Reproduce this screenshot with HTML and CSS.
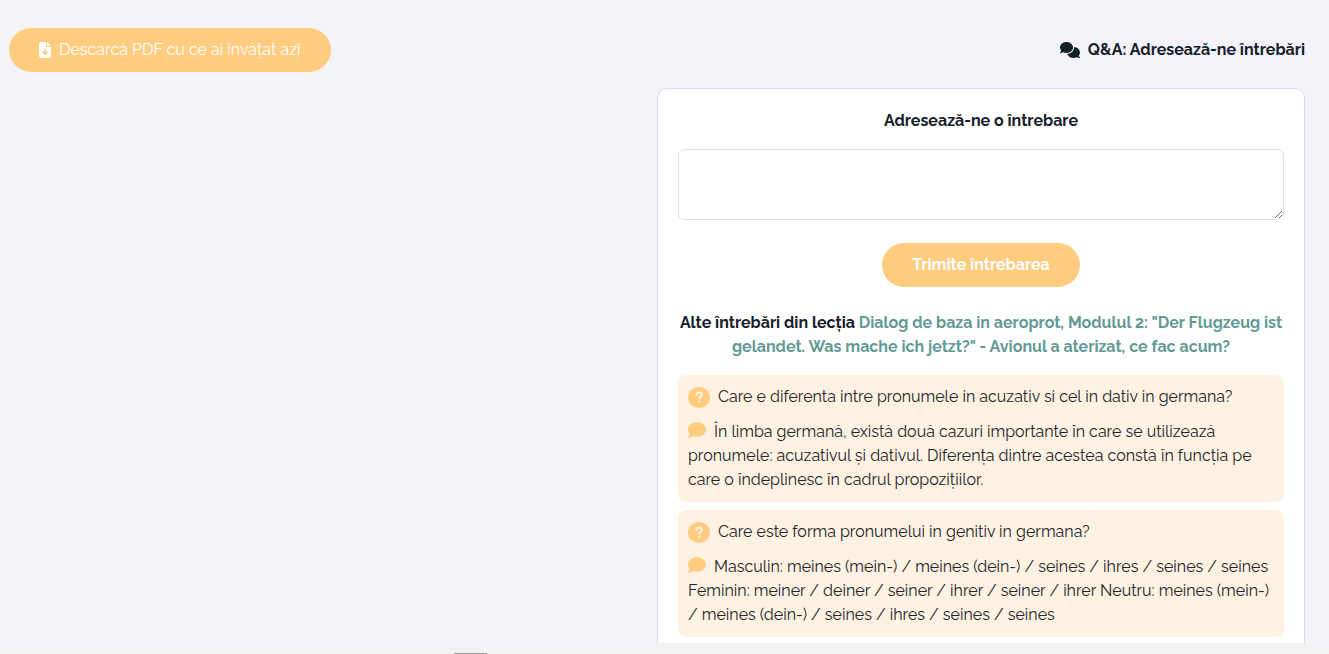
FILE: index.html
```html
<!DOCTYPE html>
<html lang="ro">
<head>
  <meta charset="UTF-8" />
  <meta name="viewport" content="width=device-width, initial-scale=1" />
  <title>Întrebări lecție</title>
  <link rel="stylesheet" href="styles.css">
</head>
<body>
  <svg class="sprite" aria-hidden="true">
    <symbol id="icon-file" viewBox="0 0 384 512">
      <path d="M64 0C28.7 0 0 28.7 0 64V448c0 35.3 28.7 64 64 64H320c35.3 0 64-28.7 64-64V160H256c-17.7 0-32-14.3-32-32V0H64zM256 0V128H384L256 0zM216 232V334.1l31-31c9.4-9.4 24.6-9.4 33.9 0s9.4 24.6 0 33.9l-72 72c-9.4 9.4-24.6 9.4-33.9 0l-72-72c-9.4-9.4-9.4-24.6 0-33.9s24.6-9.4 33.9 0l31 31V232c0-13.3 10.7-24 24-24s24 10.7 24 24z" />
    </symbol>
    <symbol id="icon-comments" viewBox="0 0 640 512">
      <path d="M208 352c114.9 0 208-78.8 208-176S322.9 0 208 0S0 78.8 0 176c0 38.6 14.7 74.3 39.6 103.4c-3.5 9.4-8.7 17.7-14.2 24.7c-4.8 6.2-9.7 11-13.3 14.3c-1.8 1.6-3.3 2.9-4.3 3.7c-.5 .4-.9 .7-1.1 .8l-.2 .2C1 327.2-1.4 334.4 .8 340.9S9.1 352 16 352c21.8 0 43.8-5.6 62.1-12.5c9.2-3.5 17.8-7.4 25.2-11.4C134.1 343.3 169.8 352 208 352zM448 176c0 112.3-99.1 196.9-216.5 207C255.8 457.4 336.4 512 432 512c38.2 0 73.9-8.7 104.7-23.9c7.5 4 16 7.9 25.2 11.4c18.3 6.9 40.3 12.5 62.1 12.5c6.9 0 13.1-4.5 15.2-11.1c2.1-6.6-.2-13.8-5.8-17.9l-.2-.2c-.2-.2-.6-.4-1.1-.8c-1-.8-2.5-2-4.3-3.7c-3.6-3.3-8.5-8.1-13.3-14.3c-5.5-7-10.7-15.4-14.2-24.7c24.9-29 39.6-64.7 39.6-103.4c0-92.8-84.9-168.9-192.6-175.5c.4 5.1 .6 10.3 .6 15.5z" />
    </symbol>
    <symbol id="icon-question" viewBox="0 0 22 21">
      <ellipse cx="11" cy="10.500" rx="11" ry="10.500" />
      <path d="M8.500 8c0-3.400 5.400-3.400 5.400-.2 0 2-2.700 2-2.700 3.800" fill="none" stroke="#fff2e3" stroke-width="2" stroke-linecap="round" />
      <circle cx="11.200" cy="14.600" r="1.200" fill="#fff2e3" />
    </symbol>
    <symbol id="icon-comment" viewBox="0 32 512 448">
      <path d="M512 240c0 114.9-114.6 208-256 208c-37.1 0-72.3-6.4-104.1-17.9c-11.9 8.7-31.3 20.6-54.3 30.6C73.6 471.1 44.7 480 16 480c-6.5 0-12.3-3.9-14.8-9.9c-2.5-6-1.1-12.8 3.4-17.4l.3-.3c.3-.3 .7-.7 1.3-1.4c1.1-1.2 2.8-3.1 4.9-5.7c4.1-5 9.6-12.4 15.2-21.6c10-16.6 19.5-38.4 21.4-62.9C17.7 326.8 0 285.1 0 240C0 125.1 114.6 32 256 32s256 93.1 256 208z" />
    </symbol>
  </svg>

  <main>
    <div class="top-bar">
      <button type="button" class="btn"><svg class="icon-file"><use href="#icon-file" /></svg>Descarcă PDF cu ce ai învățat azi</button>
      <h2><svg class="icon-comments"><use href="#icon-comments" /></svg>Q&amp;A: Adresează-ne întrebări</h2>
    </div>
    <div class="row">
      <div class="lesson"></div>
      <section class="card">
        <form class="question-form">
          <label for="question">Adresează-ne o întrebare</label>
          <textarea id="question" name="question"></textarea>
          <button type="submit" class="btn btn-bold">Trimite întrebarea</button>
        </form>
        <h3>Alte întrebări din lecția <span>Dialog de baza in aeroprot, Modulul 2: "Der Flugzeug ist gelandet. Was mache ich jetzt?" - Avionul a aterizat, ce fac acum?</span></h3>
        <article class="qa">
          <p class="question"><svg class="icon-question"><use href="#icon-question" /></svg>Care e diferenta intre pronumele in acuzativ si cel in dativ in germana?</p>
          <p><svg class="icon-comment"><use href="#icon-comment" /></svg>În limba germană, există două cazuri importante în care se utilizează pronumele: acuzativul și dativul. Diferența dintre acestea constă în funcția pe care o îndeplinesc în cadrul propozițiilor.</p>
        </article>
        <article class="qa">
          <p class="question"><svg class="icon-question"><use href="#icon-question" /></svg>Care este forma pronumelui in genitiv in germana?</p>
          <p><svg class="icon-comment"><use href="#icon-comment" /></svg>Masculin: meines (mein-) / meines (dein-) / seines / ihres / seines / seines Feminin: meiner / deiner / seiner / ihrer / seiner / ihrer Neutru: meines (mein-) / meines (dein-) / seines / ihres / seines / seines</p>
        </article>
      </section>
    </div>
  </main>
  <footer><div class="handle"></div></footer>
</body>
</html>
```
FILE: styles.css
```css
* {
  box-sizing: border-box;
}
body {
  margin: 0;
  height: 100vh;
  display: flex;
  flex-direction: column;
  background: #f4f3f9;
  color: #212529;
  font-family: Raleway, Lato, sans-serif;
  font-size: 16px;
  font-weight: 400;
  font-variant-numeric: oldstyle-nums;
  line-height: 24px;
}
h2, h3, p {
  margin: 0;
  font-size: inherit;
}
h2, h3, label {
  color: #14212b;
  font-weight: 700;
}
svg {
  fill: currentColor;
}
.sprite {
  position: absolute;
  width: 0;
  height: 0;
}
main {
  flex: 1;
  min-height: 0;
  overflow: hidden;
  padding: 28px 24px 0 9px;
}
.top-bar {
  display: flex;
  justify-content: space-between;
  align-items: center;
  margin-bottom: 16px;
}
.top-bar h2 {
  display: flex;
  align-items: center;
  gap: 8px;
}
.btn {
  display: inline-flex;
  align-items: center;
  gap: 8px;
  padding: 10px 30px;
  border: none;
  border-radius: 22px;
  background: #ffcc80;
  color: #fff;
  font: inherit;
  cursor: pointer;
}
.btn:hover {
  background: #ffc164;
}
.btn-bold {
  font-weight: 700;
}
.icon-file {
  width: 12px;
  height: 16px;
}
.icon-comments {
  width: 20px;
  height: 16px;
}
.row {
  display: grid;
  grid-template-columns: 1fr 1fr;
}
.card {
  padding: 20px;
  background: #fff;
  border: 1px solid #dcdaee;
  border-radius: 10px;
}
.question-form {
  display: flex;
  flex-direction: column;
  align-items: center;
}
textarea {
  width: 100%;
  height: 71px;
  margin: 16px 0 23px;
  padding: 6px 12px;
  border: 1px solid #dee2e6;
  border-radius: 6px;
  background: #fff;
  color: inherit;
  font: inherit;
  resize: vertical;
}
.card h3 {
  margin: 24px 0 16px;
  text-align: center;
}
.card h3 span {
  color: #639a94;
}
.qa {
  margin-bottom: 8px;
  padding: 10px;
  border-radius: 8px;
  background: #fff2e3;
}
.qa .question {
  display: flex;
  align-items: center;
  gap: 8px;
  margin-bottom: 11px;
}
.icon-question {
  flex: none;
  width: 22px;
  height: 21px;
  color: #ffcc80;
}
.icon-comment {
  width: 18px;
  height: 16px;
  margin-right: 8px;
  vertical-align: -1px;
  color: #ffcc80;
}
footer {
  display: flex;
  align-items: flex-end;
  height: 11px;
  background: #f1f3f4;
}
.handle {
  width: 33px;
  height: 1px;
  margin-left: 454px;
  background: #a0a0a0;
}
```
